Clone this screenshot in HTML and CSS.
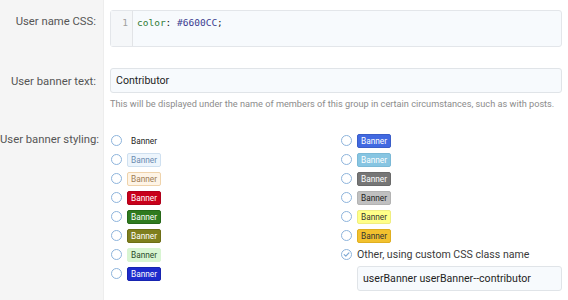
FILE: index.html
```html
<!DOCTYPE html>
<html lang="en">
  <head>
    <meta charset="UTF-8" />
    <meta name="viewport" content="width=device-width, initial-scale=1.0" />
    <title>User group</title>
    <link rel="stylesheet" href="styles.css">
  </head>
  <body>
    <div class="form">
      <div class="form-row row-css">
        <div class="row-label">User name CSS:</div>
        <div class="row-input">
          <div class="code-box">
            <div class="code-gutter">1</div>
            <div class="code-text"><span class="tok-prop">color</span>: <span class="tok-value">#6600CC</span>;</div>
          </div>
        </div>
      </div>

      <div class="form-row row-text">
        <div class="row-label">User banner text:</div>
        <div class="row-input">
          <input type="text" class="text-input" value="Contributor" />
          <div class="explain">This will be displayed under the name of members of this group in certain circumstances, such as with posts.</div>
        </div>
      </div>

      <div class="form-row row-styling">
        <div class="row-label">User banner styling:</div>
        <div class="row-input">
          <div class="banner-grid">
            <div class="banner-col">
              <label class="choice"><span class="radio"></span><span class="banner banner--plain">Banner</span></label>
              <label class="choice"><span class="radio"></span><span class="banner banner--primary">Banner</span></label>
              <label class="choice"><span class="radio"></span><span class="banner banner--accent">Banner</span></label>
              <label class="choice"><span class="radio"></span><span class="banner banner--red">Banner</span></label>
              <label class="choice"><span class="radio"></span><span class="banner banner--green">Banner</span></label>
              <label class="choice"><span class="radio"></span><span class="banner banner--olive">Banner</span></label>
              <label class="choice"><span class="radio"></span><span class="banner banner--lightGreen">Banner</span></label>
              <label class="choice"><span class="radio"></span><span class="banner banner--blue">Banner</span></label>
            </div>
            <div class="banner-col">
              <label class="choice"><span class="radio"></span><span class="banner banner--royalBlue">Banner</span></label>
              <label class="choice"><span class="radio"></span><span class="banner banner--skyBlue">Banner</span></label>
              <label class="choice"><span class="radio"></span><span class="banner banner--gray">Banner</span></label>
              <label class="choice"><span class="radio"></span><span class="banner banner--silver">Banner</span></label>
              <label class="choice"><span class="radio"></span><span class="banner banner--yellow">Banner</span></label>
              <label class="choice"><span class="radio"></span><span class="banner banner--orange">Banner</span></label>
              <label class="choice">
                <span class="radio radio--checked">
                  <svg width="11" height="11" viewBox="0 0 11 11"><path d="M3.2 5.6 L4.8 7.2 L7.9 3.9" fill="none" stroke="#7fa9d4" stroke-width="1.2" stroke-linecap="round" stroke-linejoin="round"/></svg>
                </span>
                <span class="other-text">Other, using custom CSS class name</span>
              </label>
              <div class="choice-sub">
                <input type="text" class="text-input" value="userBanner userBanner--contributor" />
              </div>
            </div>
          </div>
        </div>
      </div>
    </div>
  </body>
</html>
```

FILE: styles.css
```css
body {
  margin: 0;
  font-family: "Segoe UI", Roboto, "Noto Sans", sans-serif;
  font-size: 11px;
  color: #141414;
  background: #fff;
  height: 300px;
  overflow: hidden;
}

.form {
  display: flex;
  flex-direction: column;
  min-height: 300px;
}

.form-row {
  display: flex;
}

.form-row:last-child {
  flex: 1;
}

.row-label {
  width: 96px;
  flex: none;
  padding-right: 7px;
  background: #f5f5f5;
  border-right: 1px solid #ededed;
  text-align: right;
  white-space: nowrap;
  color: #555;
  font-size: 11.3px;
  line-height: 18px;
}

.row-input {
  flex: 1;
  min-width: 0;
  padding-left: 6px;
  padding-right: 6px;
}

/* row: user name css */

.row-css .row-label {
  padding-top: 13px;
}

.row-css .row-input {
  padding-top: 10px;
  padding-bottom: 11px;
}

.code-box {
  display: flex;
  height: 35px;
  background: #f7fafd;
  border: 1px solid #e3e6ea;
  border-radius: 3px;
  font-family: "DejaVu Sans Mono", "Liberation Mono", monospace;
  font-size: 9.5px;
  line-height: 17px;
}

.code-gutter {
  width: 17px;
  padding: 3px 4px 0 0;
  text-align: right;
  color: #a0a0a0;
  border-right: 1px solid #e2e4e7;
  background: #f5f7f9;
}

.code-text {
  padding: 3px 0 0 4px;
  color: #222;
}

.tok-prop {
  color: #2f7a35;
}

.tok-value {
  color: #3a3a8f;
}

/* row: banner text */

.row-text .row-label {
  padding-top: 15px;
}

.row-text .row-input {
  padding-top: 10px;
}

.text-input {
  display: block;
  box-sizing: border-box;
  width: 100%;
  height: 25px;
  padding: 0 5px;
  border: 1px solid #e0e4e8;
  border-radius: 3px;
  background: #f7fafd;
  font-family: inherit;
  font-size: 10.6px;
  color: #1e1e1e;
}

.explain {
  margin-top: 3px;
  font-size: 9.2px;
  line-height: 15px;
  color: #8c8c8c;
  white-space: nowrap;
}

/* row: banner styling */

.row-styling .row-label {
  padding-top: 20px;
}

.row-styling .row-input {
  padding-top: 20px;
}

.banner-grid {
  display: grid;
  grid-template-columns: 230px 1fr;
}

.banner-col {
  display: flex;
  flex-direction: column;
  min-width: 0;
}

.choice {
  display: flex;
  align-items: center;
  height: 19px;
  white-space: nowrap;
}

.choice-sub {
  padding-left: 17px;
  margin-top: 2px;
}

.radio {
  box-sizing: border-box;
  flex: none;
  width: 11px;
  height: 11px;
  margin-left: 1px;
  margin-right: 5px;
  border: 1px solid #8db4dc;
  border-radius: 50%;
  display: flex;
  align-items: center;
  justify-content: center;
}

.radio svg {
  flex: none;
}

.banner {
  box-sizing: border-box;
  display: inline-block;
  width: 34px;
  height: 14px;
  border: 1px solid transparent;
  border-radius: 2px;
  font-size: 8.3px;
  line-height: 12px;
  text-align: center;
}

.banner--plain { color: #222; }
.banner--primary { background: #edf5fc; border-color: #cfe0f0; color: #6b8bb0; }
.banner--accent { background: #fef4e6; border-color: #efd3ab; color: #9c7b55; }
.banner--red { background: #c8001a; border-color: #b0001a; color: #fff; }
.banner--green { background: #2f7a1e; border-color: #266818; color: #fff; }
.banner--olive { background: #7f7f1e; border-color: #6e6e16; color: #fff; }
.banner--lightGreen { background: #d8f5d2; border-color: #d8f5d2; color: #2a4a2a; }
.banner--blue { background: #1d2bcc; border-color: #1724b0; color: #fff; }
.banner--royalBlue { background: #4169e1; border-color: #3a5dc8; color: #fff; }
.banner--skyBlue { background: #87c5e2; border-color: #7bb9d6; color: #fff; }
.banner--gray { background: #767676; border-color: #6a6a6a; color: #fff; }
.banner--silver { background: #c0c0c0; border-color: #b3b3b3; color: #222; }
.banner--yellow { background: #ffff88; border-color: #f0ee80; color: #333; }
.banner--orange { background: #f2c12e; border-color: #e0af20; color: #333; }

.other-text {
  color: #3a3a3a;
  font-size: 10.6px;
}
```
